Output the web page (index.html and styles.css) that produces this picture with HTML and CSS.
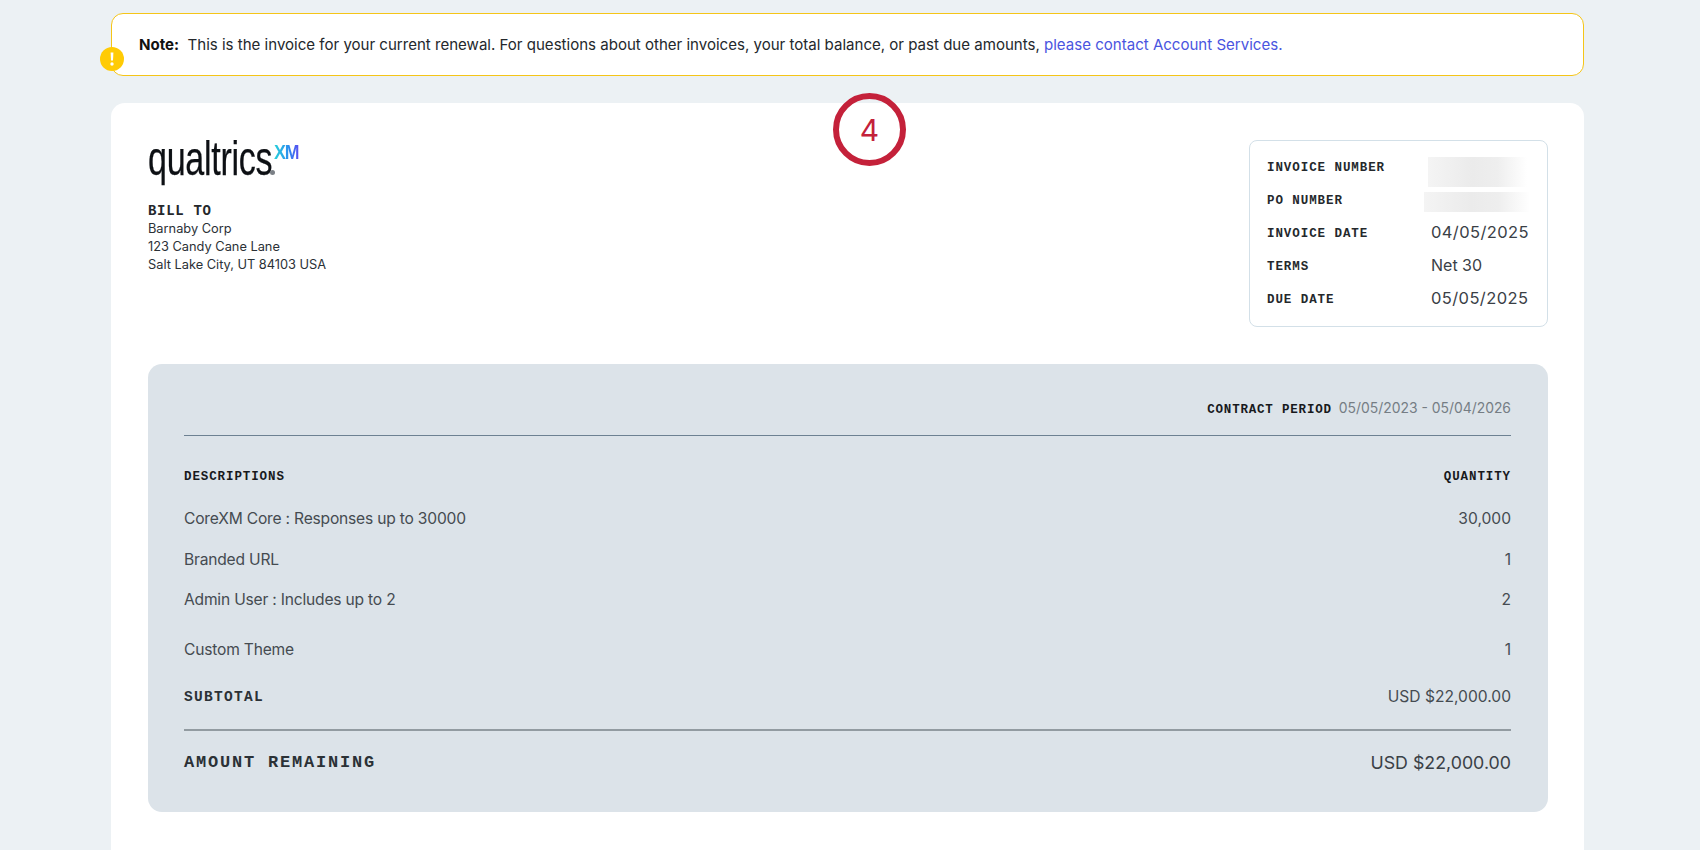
FILE: index.html
```html
<!DOCTYPE html>
<html lang="en">
<head>
<meta charset="utf-8">
<title>Invoice</title>
<link rel="stylesheet" href="styles.css">
</head>
<body>
<main class="page">
  <div class="note">
    <svg class="note-icon" viewBox="0 0 24 24" aria-hidden="true"><circle cx="12" cy="12" r="12" fill="#ffcb05"/><path d="M10.6 5.5h2.8l-.4 8h-2z" fill="#fff"/><circle cx="12" cy="17" r="1.7" fill="#fff"/></svg>
    <p><strong>Note:</strong>&nbsp; This is the invoice for your current renewal. For questions about other invoices, your total balance, or past due amounts, <a href="#">please contact Account Services.</a></p>
  </div>
  <section class="card">
    <div class="marker"><span>4</span></div>
    <header class="top">
      <div class="bill">
        <div class="logo"><span class="logo-word">qualtrics</span><span class="logo-dot"></span><span class="logo-xm">XM</span></div>
        <h2 class="mono bill-title">BILL TO</h2>
        <p>Barnaby Corp</p>
        <p>123 Candy Cane Lane</p>
        <p>Salt Lake City, UT 84103 USA</p>
      </div>
      <dl class="info">
        <dt class="mono">INVOICE NUMBER</dt><dd><span class="blur blur-a"></span></dd>
        <dt class="mono">PO NUMBER</dt><dd><span class="blur blur-b"></span></dd>
        <dt class="mono">INVOICE DATE</dt><dd class="date">04/05/2025</dd>
        <dt class="mono">TERMS</dt><dd>Net 30</dd>
        <dt class="mono">DUE DATE</dt><dd class="date">05/05/2025</dd>
      </dl>
    </header>
    <div class="panel">
      <div class="period"><span class="mono">CONTRACT PERIOD</span><span class="period-val">05/05/2023 - 05/04/2026</span></div>
      <div class="row head mono"><span>DESCRIPTIONS</span><span>QUANTITY</span></div>
      <div class="row item"><span class="desc">CoreXM Core : Responses up to 30000</span><span>30,000</span></div>
      <div class="row item"><span class="desc">Branded URL</span><span>1</span></div>
      <div class="row item"><span class="desc">Admin User : Includes up to 2</span><span>2</span></div>
      <div class="row item item-last"><span class="desc">Custom Theme</span><span>1</span></div>
      <div class="row subtotal"><span class="mono">SUBTOTAL</span><span>USD $22,000.00</span></div>
      <div class="row amount"><span class="mono">AMOUNT REMAINING</span><span>USD $22,000.00</span></div>
    </div>
  </section>
</main>
</body>
</html>
```
FILE: styles.css
```css
* { box-sizing: border-box; margin: 0; padding: 0; }
html, body { height: 850px; overflow: hidden; }
body { background: #ecf1f4; font-family: Inter, "Liberation Sans", sans-serif; color: #2b3136; }
.page { width: 1473px; margin-left: 111px; padding-top: 13px; }
.mono { font-family: "Liberation Mono", "DejaVu Sans Mono", monospace; font-weight: 700; }

.note { position: relative; height: 63px; background: #fff; border: 1px solid #f5c518; border-radius: 12px; padding-left: 27px; display: flex; align-items: center; font-size: 15.05px; color: #24282c; }
.note strong { font-weight: 700; color: #111; }
.note a { color: #4a55e0; text-decoration: none; }
.note-icon { position: absolute; left: -12px; top: 33px; width: 24px; height: 24px; }

.card { position: relative; margin-top: 27px; height: 760px; background: #fff; border-radius: 14px; padding: 37px 36px 0 37px; }
.marker { position: absolute; left: 722px; top: -10px; width: 73px; height: 73px; border: 6px solid #c4213a; border-radius: 50%; display: flex; align-items: center; justify-content: center; color: #c4213a; font-size: 30px; font-weight: 400; }

.top { display: flex; justify-content: space-between; align-items: flex-start; height: 224px; }
.logo { position: relative; height: 52px; width: 152px; }
.logo-word { position: absolute; left: 0; top: -9px; font-family: "Liberation Sans", sans-serif; font-size: 48px; line-height: 56px; color: #0d1014; transform: scaleX(0.71); transform-origin: left top; letter-spacing: -0.4px; -webkit-text-stroke: 0.25px #0d1014; }
.logo-dot { position: absolute; left: 122px; top: 30px; width: 5px; height: 5px; border-radius: 50%; background: #7b8086; }
.logo-xm { position: absolute; left: 126px; top: 1px; font-family: "Liberation Sans", sans-serif; font-weight: 700; font-size: 21px; line-height: 21px; letter-spacing: -1.5px; transform: scaleX(0.85); transform-origin: left top; background: linear-gradient(90deg, #27d3d8, #2b8cf0 60%, #5a4df0); -webkit-background-clip: text; background-clip: text; color: transparent; }
.bill { font-size: 12.8px; line-height: 18px; color: #2b3136; }
.bill-title { font-size: 14px; line-height: 18px; letter-spacing: 0.7px; color: #24282c; margin-top: 10px; }

.info { width: 299px; height: 187px; border: 1px solid #d3e0e8; border-radius: 8px; padding: 10px 17px 9px; display: grid; grid-template-columns: 164px 1fr; grid-auto-rows: 33px; align-items: center; }
.info dt { font-size: 12.5px; letter-spacing: 0.93px; color: #24282c; }
.info dd { font-size: 16px; line-height: 16px; color: #3a4046; position: relative; white-space: nowrap; margin-top: -3px; }
.info .date { font-size: 16.5px; letter-spacing: 0.4px; }
.blur { position: absolute; display: block; background: linear-gradient(90deg, #f4f4f4, #ebebeb 45%, #eeeeee 70%, #fff); }
.blur-a { left: -3px; top: -9px; width: 99px; height: 30px; }
.blur-b { left: -7px; top: -7px; width: 106px; height: 20px; }

.panel { height: 448px; background: #dce3e9; border-radius: 14px; padding: 0 37px 0 36px; }
.period { height: 72px; border-bottom: 1px solid #6d8192; padding-top: 35px; text-align: right; font-size: 13.9px; line-height: 18px; }
.period .mono { font-size: 12.5px; letter-spacing: 0.8px; color: #17191c; }
.period-val { color: #757d84; margin-left: 7px; }
.row { display: flex; justify-content: space-between; align-items: center; }
.head { margin-top: 30px; height: 22px; font-size: 12.5px; letter-spacing: 0.9px; color: #17191c; }
.item { height: 40.5px; font-size: 15.6px; color: #454b51; }
.desc { letter-spacing: -0.2px; }
.head + .item { margin-top: 10.4px; }
.item-last { margin-top: 9px; }
.subtotal { height: 62px; padding-bottom: 5px; border-bottom: 2px solid #929ba1; font-size: 15.6px; color: #454b51; }
.subtotal .mono { font-size: 14.5px; letter-spacing: 1.3px; color: #2b3136; }
.amount { height: 63px; font-size: 17.8px; color: #3a4046; }
.amount .mono { font-size: 17px; letter-spacing: 1.8px; color: #2b3136; }
```
